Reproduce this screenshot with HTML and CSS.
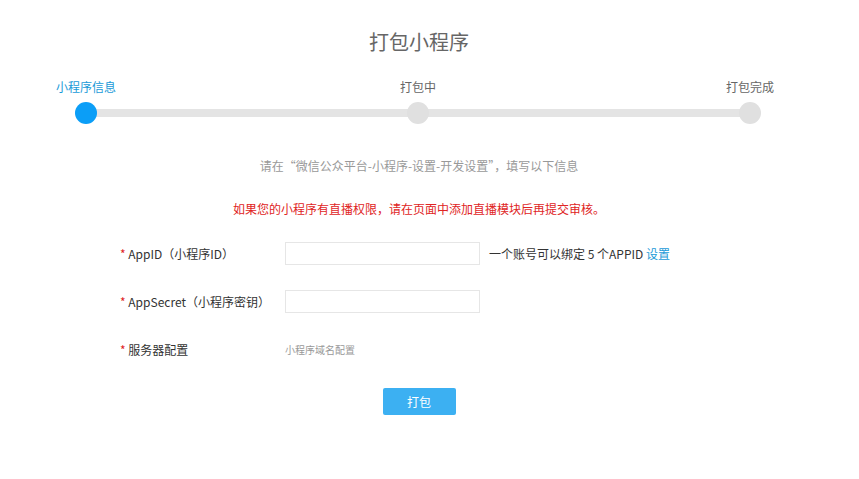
FILE: index.html
```html
<!DOCTYPE html>
<html lang="zh-CN">
<head>
    <meta charset="UTF-8">
    <meta name="viewport" content="width=device-width, initial-scale=1.0">
    <title>打包小程序</title>
    <link rel="stylesheet" href="styles.css">
</head>
<body>
    <div class="page">
        <h1>打包小程序</h1>

        <div class="steps">
            <div class="step active">
                <span class="step-name">小程序信息</span>
                <span class="dot"></span>
            </div>
            <div class="step">
                <span class="step-name">打包中</span>
                <span class="dot"></span>
            </div>
            <div class="step">
                <span class="step-name">打包完成</span>
                <span class="dot"></span>
            </div>
        </div>

        <p class="tip">请在“微信公众平台-小程序-设置-开发设置”，填写以下信息</p>
        <p class="warn">如果您的小程序有直播权限，请在页面中添加直播模块后再提交审核。</p>

        <div class="form">
            <div class="row">
                <label class="label"><em>*</em> AppID（小程序ID）</label>
                <input type="text" class="field">
                <span class="hint">一个账号可以绑定 5 个APPID <a href="#">设置</a></span>
            </div>
            <div class="row">
                <label class="label"><em>*</em> AppSecret（小程序密钥）</label>
                <input type="text" class="field">
            </div>
            <div class="row">
                <label class="label"><em>*</em> 服务器配置</label>
                <span class="sub">小程序域名配置</span>
            </div>
        </div>

        <div class="actions">
            <button>打包</button>
        </div>
    </div>
</body>
</html>
```

FILE: styles.css
```css
* {
    margin: 0;
    padding: 0;
    box-sizing: border-box;
    font-family: "Noto Sans CJK SC", "Liberation Sans", sans-serif;
}
body {
    background: #fff;
    color: #333;
}
.page {
    width: 838px;
}
h1 {
    padding-top: 28px;
    font-size: 20px;
    line-height: 28px;
    font-weight: normal;
    color: #666;
    text-align: center;
}
.steps {
    position: relative;
    display: flex;
    justify-content: space-between;
    margin: 22px 0 0 36px;
    width: 764px;
}
.steps::before {
    content: "";
    position: absolute;
    left: 50px;
    right: 50px;
    top: 31px;
    height: 8px;
    background: #e4e4e4;
}
.step {
    position: relative;
    width: 100px;
    display: flex;
    flex-direction: column;
    align-items: center;
}
.step-name {
    font-size: 12px;
    line-height: 18px;
    color: #666;
}
.dot {
    width: 22px;
    height: 22px;
    margin-top: 6px;
    border-radius: 50%;
    background: #e0e0e0;
}
.step.active .step-name {
    color: #1a9ad8;
}
.step.active .dot {
    background: #0b9ef7;
}
.tip {
    margin-top: 34px;
    font-size: 12px;
    line-height: 16px;
    color: #999;
    text-align: center;
}
.warn {
    margin-top: 27px;
    font-size: 12px;
    line-height: 16px;
    color: #e02424;
    text-align: center;
}
.form {
    margin: 25px 0 0 120px;
    display: flex;
    flex-direction: column;
    gap: 25px;
}
.row {
    display: flex;
    align-items: center;
    height: 23px;
}
.label {
    width: 165px;
    font-size: 12px;
    color: #333;
}
.label em {
    font-style: normal;
    color: #e02424;
}
.field {
    width: 195px;
    height: 23px;
    border: 1px solid #e6e6e6;
    outline: none;
}
.hint {
    margin-left: 9px;
    font-size: 12px;
    color: #333;
}
.hint a {
    color: #1a9ad8;
    text-decoration: none;
}
.sub {
    font-size: 10px;
    color: #999;
}
.actions {
    margin-top: 27px;
    display: flex;
    justify-content: center;
}
button {
    width: 73px;
    height: 27px;
    border: none;
    border-radius: 2px;
    background: #3cb0f2;
    color: #fff;
    font-size: 12px;
    cursor: pointer;
}
```
